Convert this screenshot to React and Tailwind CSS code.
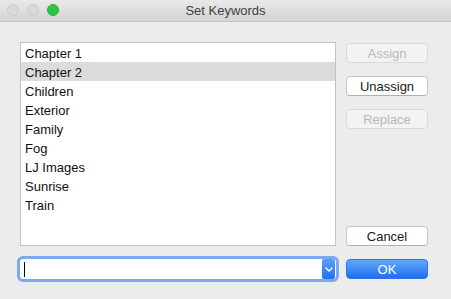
import { useState } from 'react'

const keywords = ['Chapter 1', 'Chapter 2', 'Children', 'Exterior', 'Family', 'Fog', 'LJ Images', 'Sunrise', 'Train']

function Btn({ children, disabled }) {
  return (
    <button
      className={
        disabled
          ? 'h-[20px] w-full rounded-[4px] border border-[#dadada] bg-[#f3f3f3] text-[13px] leading-none text-[#b9b9b9]'
          : 'h-[20px] w-full rounded-[4px] border border-[#c6c6c6] border-b-[#b0b0b0] bg-white text-[13px] leading-none text-[#1a1a1a]'
      }
    >
      {children}
    </button>
  )
}

export default function App() {
  const [selected, setSelected] = useState('Chapter 2')

  return (
    <div className="w-[451px] h-[299px] bg-[#ececec] overflow-hidden" style={{ fontFamily: '"Liberation Sans", Arial, sans-serif' }}>
      <div className="relative h-[22px] flex items-center justify-center bg-gradient-to-b from-[#e9e9e9] to-[#d4d4d4] border-b border-[#c3c3c3]">
        <div className="absolute left-[7px] top-[4px] flex gap-[8px]">
          <span className="w-[12px] h-[12px] rounded-full bg-[#d9d9d9] border border-[#c9c9c9]" />
          <span className="w-[12px] h-[12px] rounded-full bg-[#d9d9d9] border border-[#c9c9c9]" />
          <span className="w-[12px] h-[12px] rounded-full bg-[#2ac840] border border-[#22b236]" />
        </div>
        <span className="text-[13px] text-[#3f3f3f] pt-[1px]">Set Keywords</span>
      </div>

      <div className="px-[20px] pt-[20px]">
        <div className="flex gap-[10px]">
          <div className="w-[316px] h-[204px] bg-white border border-[#c2c2c2]">
            {keywords.map(k => (
              <div
                key={k}
                onClick={() => setSelected(k)}
                className={'h-[19px] flex items-center pl-[4px] pt-[2px] text-[13px] text-[#111] ' + (selected === k ? 'bg-[#dcdcdc]' : '')}
              >
                {k}
              </div>
            ))}
          </div>
          <div className="w-[82px] flex flex-col justify-between pt-[1px]">
            <div className="flex flex-col gap-[13px]">
              <Btn disabled>Assign</Btn>
              <Btn>Unassign</Btn>
              <Btn disabled>Replace</Btn>
            </div>
            <Btn>Cancel</Btn>
          </div>
        </div>

        <div className="flex gap-[10px] mt-[13px]">
          <div className="w-[316px] h-[20px] flex rounded-[3px] outline-[3px] outline-solid outline-[#7ba8f1] bg-white">
            <div className="flex-1 flex items-center pl-[4px]">
              <span className="w-px h-[15px] bg-black" />
            </div>
            <div className="w-[13px] h-full mr-[1px] flex items-center justify-center rounded-[2px] bg-gradient-to-b from-[#5c9ef9] to-[#1f6ff0]">
              <svg width="8" height="5" viewBox="0 0 8 5" fill="none">
                <path d="M1 1l3 3 3-3" stroke="white" strokeWidth="1.4" strokeLinecap="round" strokeLinejoin="round" />
              </svg>
            </div>
          </div>
          <button className="w-[82px] h-[20px] rounded-[4px] border border-[#2d75ea] bg-gradient-to-b from-[#62a7fb] to-[#1d6ff0] text-[13px] leading-none text-white">
            OK
          </button>
        </div>
      </div>
    </div>
  )
}
